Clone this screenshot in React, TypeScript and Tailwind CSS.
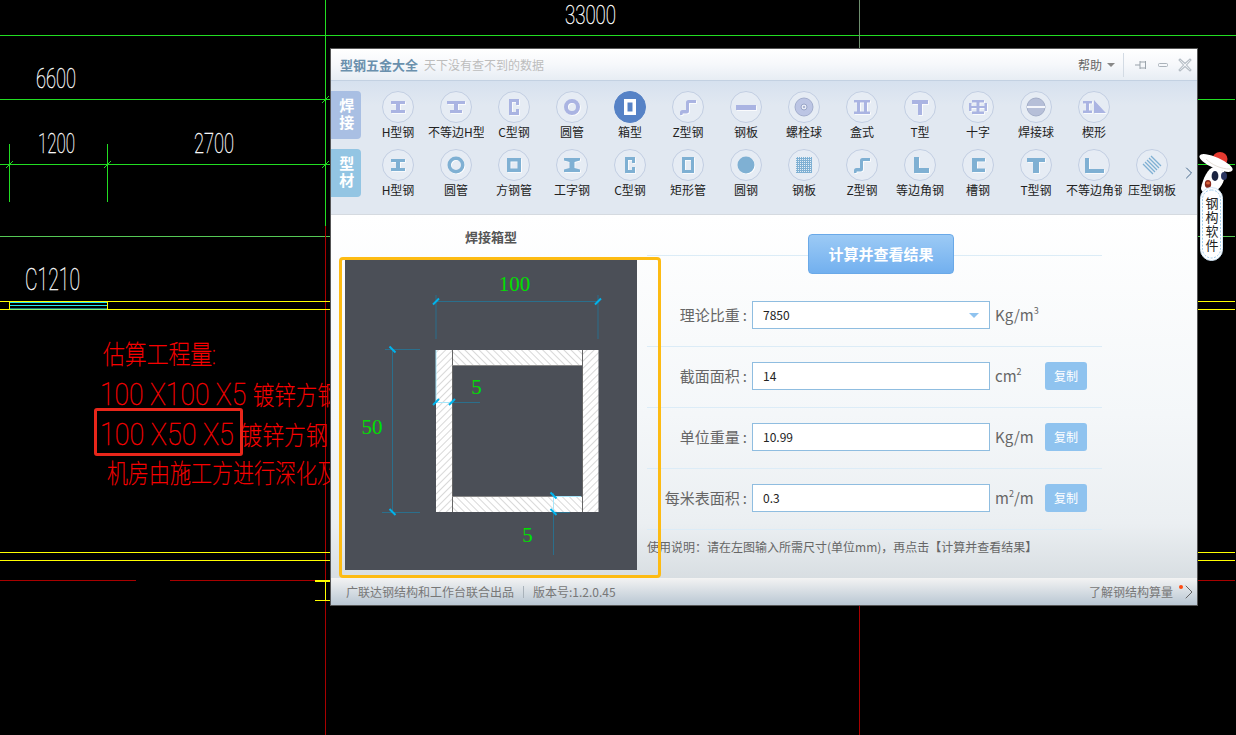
import { ChevronRight } from 'lucide-react';

const RING = 'M16 8a8 8 0 1 0 0 16a8 8 0 1 0 0-16zM16 12a4 4 0 1 1 0 8a4 4 0 1 1 0-8z';
const H_BEAM = 'M9 10h14v3h-5v6h5v3H9v-3h5v-6H9z';
const C_BEAM = 'M11 8h10v6h-3v-3h-4v10h4v-3h3v6H11z';
const Z_BEAM = 'M8 24v-2.5a2.5 2.5 0 0 1 2.5-2.5H14V11.5A2.5 2.5 0 0 1 16.5 9H24v3h-6.5a.5.5 0 0 0-.5.5V20a2.5 2.5 0 0 1-2.5 2.5h-3.5a.5.5 0 0 0-.5.5v1z';

const weldIcons: { label: string; d: string; active?: boolean; kind?: string }[] = [
  { label: 'H型钢', d: H_BEAM },
  { label: '不等边H型', d: 'M7 10h18v3h-7v6h4v3H10v-3h4v-6H7z' },
  { label: 'C型钢', d: C_BEAM },
  { label: '圆管', d: RING },
  { label: '箱型', d: 'M10 8h12v16H10zM13.5 11.5v9h5v-9z', active: true },
  { label: 'Z型钢', d: Z_BEAM },
  { label: '钢板', d: 'M6 14h20v5H6z' },
  { label: '螺栓球', d: '', kind: 'bolt' },
  { label: '盒式', d: 'M8 9h16v2.5H8zM11 11.5h3v9h-3zM18 11.5h3v9h-3zM8 20.5h16V23H8z' },
  { label: 'T型', d: 'M8 9h16v4h-6v11h-4V13H8z' },
  { label: '十字', d: 'M10 9h12v2.5h-4.5v3.5h5v2h-5v3.5H22V23H10v-2.5h4.5V17h-5v-2h5v-3.5H10zM7 12h2.5v8H7zM22.5 12H25v8h-2.5z' },
  { label: '焊接球', d: '', kind: 'ball' },
  { label: '楔形', d: 'M5 10h9v2.5h-3v7h3V22H5v-2.5h3v-7H5zM16 9l12 13H16z' },
];

const profileIcons: { label: string; d: string; kind?: string }[] = [
  { label: 'H型钢', d: H_BEAM },
  { label: '圆管', d: 'M16 7.5a8.5 8.5 0 1 0 0 17a8.5 8.5 0 1 0 0-17zM16 11a5 5 0 1 1 0 10a5 5 0 1 1 0-10z' },
  { label: '方钢管', d: 'M9 9h14v14H9zM12.5 12.5v7h7v-7z' },
  { label: '工字钢', d: 'M8 9h16v2.5l-5.5 1.5v6l5.5 1.5V23H8v-2.5l5.5-1.5v-6L8 11.5z' },
  { label: 'C型钢', d: C_BEAM },
  { label: '矩形管', d: 'M10 8h12v16H10zM13 11v10h6V11z' },
  { label: '圆钢', d: 'M16 7.5a8.5 8.5 0 1 0 0 17a8.5 8.5 0 1 0 0-17z' },
  { label: '钢板', d: '', kind: 'dots' },
  { label: 'Z型钢', d: Z_BEAM },
  { label: '等边角钢', d: 'M10 8h5v11h10v5H10z' },
  { label: '槽钢', d: 'M10 9h13v3.5h-8v7h8V23H10z' },
  { label: 'T型钢', d: 'M7 9h18v4h-6v11h-6V13H7z' },
  { label: '不等边角钢', d: 'M7 9h4v11h15v4H7z' },
  { label: '压型钢板', d: '', kind: 'stripes' },
];

function ToolIcon({ d, color, active, kind }: { d: string; color: string; active?: boolean; kind?: string }) {
  return (
    <svg viewBox="0 0 32 32" className="w-8 h-8 block">
      <circle cx="16" cy="16" r="15.5" fill={active ? '#5682c6' : '#e6ecf4'} stroke={active ? '#5682c6' : '#c2cee2'} />
      {d && !active && <path d={d} fill="#fff" fillRule="evenodd" transform="translate(.8 .8)" />}
      {d && <path d={d} fill={active ? '#fff' : color} fillRule="evenodd" />}
      {kind === 'bolt' && (
        <>
          <circle cx="16" cy="16" r="9" fill="#bcc5e4" stroke="#a3aecd" />
          <circle cx="16" cy="16" r="3" fill="#e8ecf6" stroke="#9aa5c8" />
          <circle cx="16" cy="16" r="1" fill="#9aa5c8" />
        </>
      )}
      {kind === 'ball' && (
        <>
          <circle cx="16" cy="16" r="9" fill="#b6bfd8" stroke="#a3aec8" />
          <rect x="7" y="15" width="18" height="2" fill="#f4f6fb" />
        </>
      )}
      {kind === 'dots' && (
        <>
          <rect x="8" y="8" width="16" height="16" fill={color} />
          <rect x="8" y="8" width="16" height="16" fill="url(#tool-dots)" />
        </>
      )}
      {kind === 'stripes' && (
        <g stroke={color} strokeWidth="1.3">
          <path d="M7 15l10 10M9 13l10 10M11 11l10 10M13 9l10 10M15 7l10 10" />
        </g>
      )}
    </svg>
  );
}

function ToolItem({ label, children }: { label: string; children: React.ReactNode }) {
  return (
    <div className="w-[58px] shrink-0 flex flex-col items-center">
      {children}
      <div className="w-[56px] text-center text-[12px] leading-4 mt-px text-[#222] whitespace-nowrap overflow-hidden">{label}</div>
    </div>
  );
}

function SectionTab({ text, className }: { text: string; className: string }) {
  return (
    <div className={`w-[30px] h-12 mr-2 shrink-0 rounded-r-[4px] flex items-center justify-center text-white font-bold text-[15px] tracking-[2px] [writing-mode:vertical-rl] ${className}`}>
      {text}
    </div>
  );
}

function FieldRow({ label, value, unit, copy = true, select = false, first = false }: { label: string; value: string; unit: React.ReactNode; copy?: boolean; select?: boolean; first?: boolean }) {
  return (
    <div className={`flex items-center border-b border-[#dcecf7] pb-[17px] ${first ? 'pt-[45px]' : 'pt-[15px]'}`}>
      <div className="w-[105px] flex justify-end pr-[5px] text-[15px] text-[#666] leading-5 whitespace-nowrap">
        {label}
        <span className="ml-[3px]">:</span>
      </div>
      <div className="w-[238px] h-7 bg-white border border-[#8fbde0] flex items-center pl-[10px] pr-[10px] text-[12px] text-[#222]">
        <span className="flex-1">{value}</span>
        {select && <span className="w-0 h-0 border-x-[5px] border-x-transparent border-t-[5px] border-t-[#8fc3ef]" />}
      </div>
      <div className="w-[55px] pl-[5px] text-[15px] text-[#666] leading-5 whitespace-nowrap">{unit}</div>
      {copy && (
        <button className="w-[42px] h-7 rounded-[3px] bg-[#8fc3ef] text-white text-[12px]">复制</button>
      )}
    </div>
  );
}

function Tick({ x, y, back = false }: { x: number; y: number; back?: boolean }) {
  return (
    <line
      x1={x - 3}
      y1={back ? y - 3 : y + 3}
      x2={x + 3}
      y2={back ? y + 3 : y - 3}
      stroke="#00b4ec"
      strokeWidth="2"
    />
  );
}

function BoxDiagram() {
  const dim = '#2b6f8c';
  const pale = '#a8e6fa';
  const green = '#00e000';
  return (
    <svg viewBox="0 0 292 311" className="w-[292px] h-[311px] block bg-[#4b4f57]">
      <defs>
        <pattern id="hatch-f" width="5" height="5" patternUnits="userSpaceOnUse" patternTransform="rotate(45)">
          <rect width="5" height="5" fill="#fff" />
          <line x1="0" y1="0" x2="0" y2="5" stroke="#b8b8b8" strokeWidth="1.1" />
        </pattern>
        <pattern id="hatch-b" width="5" height="5" patternUnits="userSpaceOnUse" patternTransform="rotate(-45)">
          <rect width="5" height="5" fill="#fff" />
          <line x1="0" y1="0" x2="0" y2="5" stroke="#b8b8b8" strokeWidth="1.1" />
        </pattern>
      </defs>

      <rect x="107" y="91" width="130" height="16" fill="url(#hatch-b)" />
      <rect x="107" y="237" width="130" height="16" fill="url(#hatch-b)" />
      <rect x="91" y="91" width="16" height="162" fill="url(#hatch-f)" />
      <rect x="237.5" y="91" width="16" height="162" fill="url(#hatch-f)" />
      <path d="M107.5 91v162M237.5 91v162" stroke="#666" />
      <path d="M107 106.5h130M107 237.5h130" stroke="#888" />

      <g stroke={dim} fill="none">
        <path d="M91 36v44M253 36v44M91 42.5h162" />
        <path d="M47.5 91v162M40 90.5h35M37 253.5h38" />
        <path d="M107 143.5h28" />
        <path d="M208.5 234v62M208 253.5h17" />
      </g>
      <g stroke={pale} fill="none">
        <path d="M91 91v52M91 143.5h16" />
        <path d="M208.5 237v16M208 237.5h28" />
      </g>

      <Tick x={91} y={42.5} />
      <Tick x={253} y={42.5} />
      <Tick x={47.5} y={90.5} back />
      <Tick x={47.5} y={253} back />
      <Tick x={91} y={143} />
      <Tick x={107} y={143} />
      <Tick x={208.5} y={236.5} back />
      <Tick x={208.5} y={253} back />

      <g fill={green} fontFamily="'Liberation Serif', serif" fontSize="21" textAnchor="middle">
        <text x="169.5" y="32">100</text>
        <text x="27" y="175">50</text>
        <text x="131.5" y="135">5</text>
        <text x="182.5" y="283">5</text>
      </g>
    </svg>
  );
}

function CadText({ x, y, w, size, fill = '#fff', children }: { x: number; y: number; w: number; size: number; fill?: string; children: React.ReactNode }) {
  return (
    <text x={x} y={y} textLength={w} lengthAdjust="spacingAndGlyphs" fontSize={size} fill={fill} stroke={fill} strokeWidth=".35" fontWeight="100" fontFamily="Roboto, 'Noto Sans CJK SC', sans-serif">
      {children}
    </text>
  );
}

function CadBackdrop() {
  const green = '#22dd22';
  const yellow = '#ffff00';
  const maroon = '#a80000';
  return (
    <svg viewBox="0 0 1236 735" className="absolute inset-0 w-[1236px] h-[735px]">
      <g stroke={green} fill="none">
        <path d="M0 35.5h1236M0 99.5h1235M0 164.5h1235" />
        <path d="M325.5 0v226" />
        <path d="M9.5 144v58M107.5 144v58" />
        <path d="M6 168l7-7M104 168l7-7M322 168l7-7M322 103l7-7" />
      </g>
      <path d="M0 236.5h1235" stroke="#55c855" />
      <path d="M859.5 0v49" stroke="#6f8f6f" />
      <path d="M859.5 606v129" stroke={maroon} />
      <path d="M325.5 226v509" stroke={maroon} />

      <g stroke={yellow} fill="none">
        <path d="M0 301.5h330M0 309.5h330M9.5 301v9M107.5 301v9" />
        <path d="M1197 301.5h38M1197 309.5h38" />
        <path d="M0 552.5h330M1197 552.5h38M0 560.5h330M1197 560.5h38" />
        <path d="M325.5 581v19M315 600.5h15" />
        <path d="M315 581h15" strokeWidth="2" />
      </g>
      <path d="M10 302.5h97M10 305.5h97M10 309h97" stroke="#22e6f0" />
      <path d="M0 580.5h136M170 580.5h145M1197 580.5h38" stroke={maroon} />

      <CadText x={565} y={24} w={51} size={26}>33000</CadText>
      <CadText x={36} y={88} w={40} size={28}>6600</CadText>
      <CadText x={38} y={153} w={37} size={28}>1200</CadText>
      <CadText x={194} y={153} w={40} size={28}>2700</CadText>
      <CadText x={25} y={290} w={55} size={32}>C1210</CadText>

      <CadText x={103} y={364} w={113} size={26} fill="#ff0000">估算工程量:</CadText>
      <CadText x={100} y={405} w={239} size={32} fill="#ff0000">
        100 X100 X5 <tspan fontSize="26">镀锌方钢</tspan>
      </CadText>
      <CadText x={100} y={445} w={228} size={32} fill="#ff0000">
        100 X50 X5 <tspan fontSize="26">镀锌方钢</tspan>
      </CadText>
      <CadText x={107} y={483} w={231} size={26} fill="#ff0000">机房由施工方进行深化及</CadText>
    </svg>
  );
}

function Mascot() {
  return (
    <div className="absolute left-[1198px] top-[150px] w-[38px] h-[112px]">
      <svg viewBox="0 0 38 112" className="absolute inset-0 w-[38px] h-[112px]">
        <path d="M3 38c2-10 7-20 13-21l10 4c2 8-2 16-8 20c-6 4-15 3-15-3z" fill="#fff" />
        <ellipse cx="22" cy="9" rx="7.5" ry="7" fill="#e53a30" />
        <ellipse cx="18" cy="13" rx="18" ry="5.5" transform="rotate(24 18 13)" fill="#fff" />
        <path d="M8 9c6 6 15 10 24 10" stroke="#e6e0d8" fill="none" />
        <ellipse cx="17" cy="26" rx="3.4" ry="5" fill="#1a2340" />
        <ellipse cx="26" cy="26" rx="3" ry="4" fill="#2a3560" />
        <ellipse cx="10" cy="34" rx="3.2" ry="4" fill="#8a2a1c" />
        <ellipse cx="10" cy="33" rx="2" ry="1.6" fill="#d9643c" />
        <rect x="2.5" y="37.5" width="22" height="73" rx="11" fill="#fff" stroke="#cfe4f5" />
        <rect x="4.5" y="40" width="18" height="68" rx="9" fill="none" stroke="#9ccbec" strokeDasharray="2 1.5" />
      </svg>
      <div className="absolute left-[2.5px] top-[47px] w-[22px] flex justify-center text-[13px] leading-[22px] tracking-[1px] text-[#222] [writing-mode:vertical-rl]">
        钢构软件
      </div>
    </div>
  );
}

export default function App() {
  return (
    <div className="relative w-[1236px] h-[735px] overflow-hidden bg-black font-['Noto_Sans_CJK_SC',sans-serif]">
      <CadBackdrop />
      <div className="absolute left-[94px] top-[408px] w-[149px] h-12 border-[3px] border-[#e8261a] rounded-[3px]" />

      <div className="absolute left-[330px] top-[48px] w-[868px] h-[558px] border border-[#555] flex flex-col">
        {/* title bar */}
        <div className="h-8 shrink-0 flex items-center pl-[9px] pr-[5px] border-b border-[#c3d1e2] bg-[linear-gradient(180deg,#fff,#f6f8fb_50%,#e7edf4)]">
          <span className="text-[13px] font-bold text-[#6a90ad]">型钢五金大全</span>
          <span className="ml-[6px] text-[12px] text-[#bdbdbd]">天下没有查不到的数据</span>
          <div className="ml-auto flex items-center">
            <span className="text-[12px] text-[#666]">帮助</span>
            <span className="ml-[5px] w-0 h-0 border-x-[4px] border-x-transparent border-t-[4px] border-t-[#888]" />
            <span className="ml-[8px] w-px h-6 bg-[#d3dbe4]" />
            <svg viewBox="0 0 14 14" className="w-[14px] h-[14px] ml-[10px]" fill="none" stroke="#9aa3ab">
              <path d="M1 7h5M6 3v8M6 4h5.5v6H6M11.5 3v8" />
            </svg>
            <svg viewBox="0 0 12 12" className="w-3 h-3 ml-[9px]" fill="none" stroke="#aab2ba">
              <rect x="1.5" y="4.5" width="9" height="3" rx="1" />
            </svg>
            <svg viewBox="0 0 14 14" className="w-[14px] h-[14px] ml-[9px]" fill="none" stroke="#b4bcc4" strokeWidth="1.1">
              <path d="M2 1l5 4.5L12 1l1 1-4.5 5L13 12l-1 1-5-4.5L2 13l-1-1 4.5-5L1 2z" />
            </svg>
          </div>
        </div>

        {/* toolbar */}
        <div className="h-[134px] shrink-0 border-b border-[#d5dae0] pt-[10px] bg-[linear-gradient(180deg,#d6e1ef,#e1e8f1_18%,#e1e8f1)]">
          <svg className="absolute w-0 h-0">
            <defs>
              <pattern id="tool-dots" width="2" height="2" patternUnits="userSpaceOnUse">
                <rect width="1" height="1" fill="#e4eef6" />
              </pattern>
            </defs>
          </svg>
          <div className="flex h-[58px]">
            <SectionTab text="焊接" className="bg-[#a9bfe3]" />
            {weldIcons.map((item) => (
              <ToolItem key={item.label} label={item.label}>
                <ToolIcon d={item.d} color="#aab4e2" active={item.active} kind={item.kind} />
              </ToolItem>
            ))}
          </div>
          <div className="flex h-[58px]">
            <SectionTab text="型材" className="bg-[#93c5e3]" />
            {profileIcons.map((item) => (
              <ToolItem key={item.label + item.d} label={item.label}>
                <ToolIcon d={item.d} color="#7fb0d3" kind={item.kind} />
              </ToolItem>
            ))}
            <ChevronRight className="w-5 h-5 shrink-0 mt-[14px] -ml-[2px] text-[#45688c]" strokeWidth={1.2} />
          </div>
        </div>

        {/* body */}
        <div className="relative flex-1 flex pl-[14px] bg-[linear-gradient(180deg,#fff_0%,#f4f7f9_55%,#ebeff2_85%,#d8dee2_100%)]">
          <div className="w-[292px] shrink-0">
            <div className="h-11 flex items-center justify-center text-[13px] font-bold text-[#555]">焊接箱型</div>
            <BoxDiagram />
          </div>
          <div className="w-[455px] ml-[10px]">
            <div className="h-[41px] pt-[19px] border-b border-[#dcecf7]">
              <button className="relative ml-[161px] w-[146px] h-10 rounded-[4px] border border-[#6aa9e8] bg-[linear-gradient(180deg,#9ccaf5,#72b0ef)] text-white text-[15px] font-bold">
                计算并查看结果
              </button>
            </div>
            <FieldRow first select copy={false} label="理论比重" value="7850" unit={<>Kg/m<sup className="text-[9px] -top-[7px]">3</sup></>} />
            <FieldRow label="截面面积" value="14" unit={<>cm<sup className="text-[9px] -top-[7px]">2</sup></>} />
            <FieldRow label="单位重量" value="10.99" unit="Kg/m" />
            <FieldRow label="每米表面积" value="0.3" unit={<>m<sup className="text-[9px] -top-[7px]">2</sup>/m</>} />
            <div className="mt-[9px] text-[12px] leading-4 text-[#666] whitespace-nowrap">
              使用说明：请在左图输入所需尺寸(单位mm)，再点击【计算并查看结果】
            </div>
          </div>
          {/* highlight drawn over the screenshot */}
          <div className="absolute left-[8px] top-[42px] w-[322px] h-[321px] border-[3px] border-[#fdbb13] rounded-[4px]" />
        </div>

        {/* status bar */}
        <div className="h-[27px] shrink-0 flex items-center pl-[15px] text-[12px] text-[#777] bg-[linear-gradient(180deg,#f3f3f3,#b9c7d3)]">
          <span>广联达钢结构和工作台联合出品</span>
          <span className="w-px h-3 bg-[#a9b2ba] mx-[9px]" />
          <span>版本号:1.2.0.45</span>
          <div className="ml-auto flex items-center relative -mr-[4px]">
            <span>了解钢结构算量</span>
            <span className="absolute left-[90px] top-[5px] w-1 h-1 rounded-full bg-[#ff4a10]" />
            <ChevronRight className="w-6 h-6 ml-[4px] text-[#666]" strokeWidth={1} />
          </div>
        </div>
      </div>

      <Mascot />
    </div>
  );
}
